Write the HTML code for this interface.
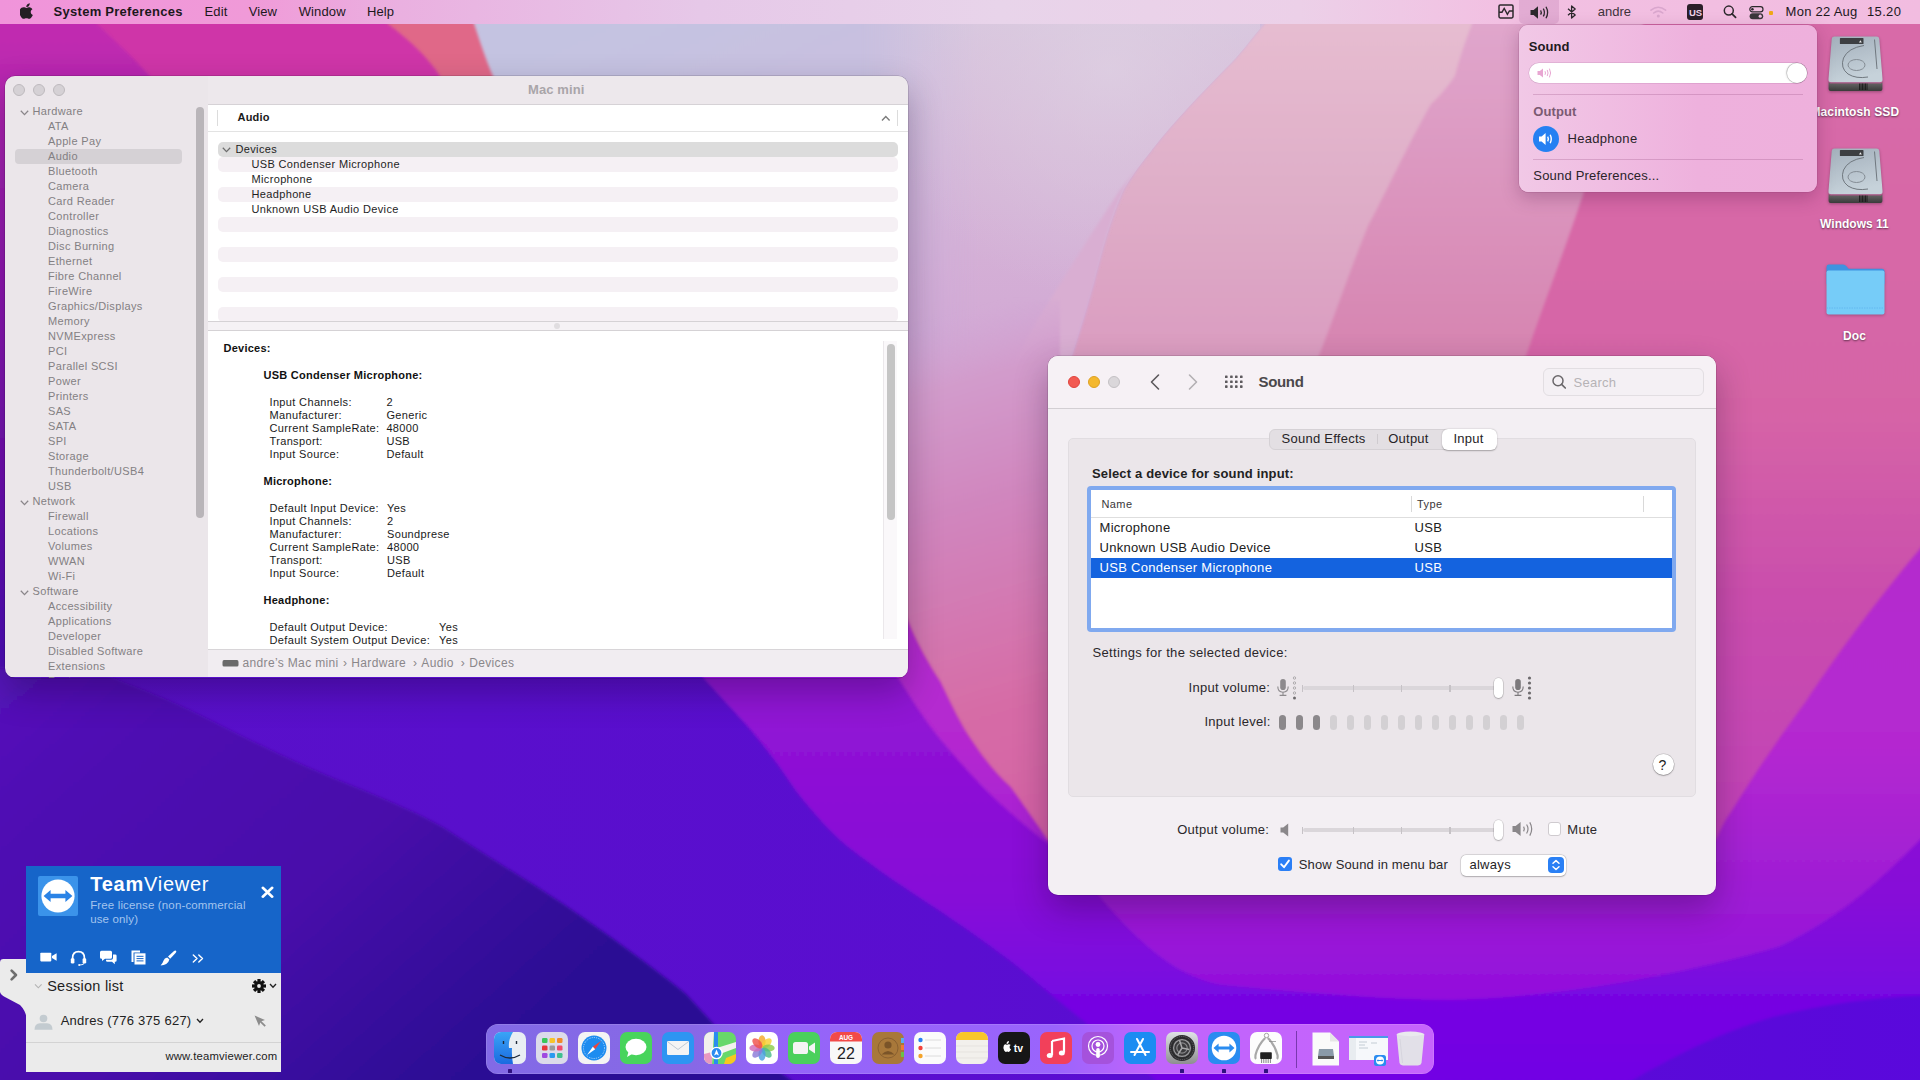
<!DOCTYPE html>
<html><head><meta charset="utf-8"><style>
*{box-sizing:border-box;margin:0;padding:0}
html,body{width:1920px;height:1080px;overflow:hidden;font-family:"Liberation Sans",sans-serif;}
body{position:relative;background:#5510cc}
.t{position:absolute;line-height:1;white-space:nowrap}
.r{position:absolute}
.win{position:absolute;overflow:hidden;box-shadow:0 0 0 0.5px rgba(0,0,0,0.22),0 14px 34px rgba(20,0,40,0.3)}
#wall{position:absolute;left:0;top:0;width:1920px;height:1080px}
#menubar{position:absolute;left:0;top:0;width:1920px;height:24px;
 background:linear-gradient(90deg,#f094da 0px,#f09ad8 250px,#eab0e0 400px,#e6c8e8 700px,#e8d4ea 1000px,#ecd0e8 1300px,#f2c0e2 1500px,#f2bce0 1920px);}
</style></head><body>
<svg id="wall" width="1920" height="1080" viewBox="0 0 1920 1080">
<defs>
 <filter id="bl" x="-5%" y="-5%" width="110%" height="110%"><feGaussianBlur stdDeviation="1.5"/></filter>
 <filter id="bl20" x="-20%" y="-20%" width="140%" height="140%"><feGaussianBlur stdDeviation="25"/></filter>
 <linearGradient id="gLav" gradientUnits="userSpaceOnUse" x1="600" y1="24" x2="850" y2="560">
  <stop offset="0" stop-color="#c4c3e1"/><stop offset="0.3" stop-color="#c9bfe0"/><stop offset="0.65" stop-color="#ccaad8"/><stop offset="1" stop-color="#c898d0"/>
 </linearGradient>
 <radialGradient id="gCloud" gradientUnits="userSpaceOnUse" cx="1110" cy="70" r="230"><stop offset="0" stop-color="#e0d4e4" stop-opacity="1"/><stop offset="0.5" stop-color="#dccce0" stop-opacity="0.7"/><stop offset="1" stop-color="#d8c8e0" stop-opacity="0"/></radialGradient>
 <linearGradient id="gBW" gradientUnits="userSpaceOnUse" x1="900" y1="330" x2="1050" y2="845">
  <stop offset="0" stop-color="#d0a6d4" stop-opacity="0"/><stop offset="0.12" stop-color="#d29ccc" stop-opacity="1"/><stop offset="0.35" stop-color="#d086be"/><stop offset="0.72" stop-color="#d66ca6"/><stop offset="1" stop-color="#d460a4"/>
 </linearGradient>
 <linearGradient id="gRP" x1="0" y1="0" x2="0" y2="1">
  <stop offset="0" stop-color="#d86ca8"/><stop offset="0.5" stop-color="#d664a6"/><stop offset="0.71" stop-color="#ca4eac"/><stop offset="1" stop-color="#c040b8"/>
 </linearGradient>
 <linearGradient id="gMag" x1="0" y1="0" x2="0" y2="1">
  <stop offset="0" stop-color="#b434c8"/><stop offset="0.75" stop-color="#b428d0"/><stop offset="0.88" stop-color="#a01ed4"/><stop offset="1" stop-color="#920edc"/>
 </linearGradient>
 <linearGradient id="gLeft" x1="0" y1="0" x2="0" y2="1">
  <stop offset="0" stop-color="#c02ab0"/><stop offset="0.086" stop-color="#c02ab0"/><stop offset="0.29" stop-color="#a020b0"/><stop offset="0.43" stop-color="#9018b0"/><stop offset="0.71" stop-color="#7010b0"/><stop offset="0.97" stop-color="#5010b8"/><stop offset="1" stop-color="#5010b8"/>
 </linearGradient>
 <radialGradient id="gGlow" cx="0.5" cy="0.5" r="0.5"><stop offset="0" stop-color="#a422d0" stop-opacity="0.8"/><stop offset="0.6" stop-color="#9c1ed2" stop-opacity="0.45"/><stop offset="1" stop-color="#9418d4" stop-opacity="0"/></radialGradient>
 <linearGradient id="gBase" x1="0" y1="0" x2="1" y2="0"><stop offset="0" stop-color="#5810c8"/><stop offset="0.5" stop-color="#5a0ed0"/><stop offset="1" stop-color="#5a08dc"/></linearGradient>
 <linearGradient id="gPur" x1="0" y1="0" x2="0" y2="1"><stop offset="0" stop-color="#9016d4"/><stop offset="0.66" stop-color="#9012d4"/><stop offset="0.82" stop-color="#860ed8"/><stop offset="0.91" stop-color="#7606e2"/><stop offset="1" stop-color="#7006e4"/></linearGradient>
 <linearGradient id="gB2" gradientUnits="userSpaceOnUse" x1="0" y1="24" x2="0" y2="356"><stop offset="0" stop-color="#e0a6cc"/><stop offset="1" stop-color="#d684b0"/></linearGradient>
 <linearGradient id="gB1" gradientUnits="userSpaceOnUse" x1="0" y1="24" x2="0" y2="356"><stop offset="0" stop-color="#e6bcd0"/><stop offset="0.5" stop-color="#dfaec8"/><stop offset="1" stop-color="#da9cc0"/></linearGradient>
 <linearGradient id="gDark" gradientUnits="userSpaceOnUse" x1="0" y1="680" x2="400" y2="1130"><stop offset="0" stop-color="#5412ba"/><stop offset="0.22" stop-color="#4e0eb2"/><stop offset="0.6" stop-color="#4810aa"/><stop offset="0.95" stop-color="#2e0e96"/><stop offset="1" stop-color="#2c0e94"/></linearGradient>
 <linearGradient id="gPL" gradientUnits="userSpaceOnUse" x1="0" y1="24" x2="0" y2="640"><stop offset="0" stop-color="#d8c6de"/><stop offset="0.2" stop-color="#d6b8d8"/><stop offset="0.53" stop-color="#d2a8d4"/><stop offset="1" stop-color="#cc9cd0"/></linearGradient>
 <linearGradient id="gPLm" gradientUnits="userSpaceOnUse" x1="860" y1="0" x2="980" y2="0"><stop offset="0" stop-color="#fff" stop-opacity="0"/><stop offset="1" stop-color="#fff" stop-opacity="1"/></linearGradient>
 <mask id="mPL"><rect x="800" y="-20" width="500" height="700" fill="url(#gPLm)"/></mask>
</defs>
<rect x="-20" y="-20" width="1960" height="1120" fill="url(#gBase)"/>
<!-- dark lower-left -->
<path d="M-20 620 L125 683 C170 700 190 710 208 719 C240 735 265 748 292 760 C330 778 370 792 400 806 C420 815 430 820 442.5 827 C490 858 530 882 564 904.5 C610 936 650 965 686 994 L719 1030 L820 1100 L-20 1100 Z" fill="url(#gDark)" filter="url(#bl)"/>
<!-- purple region -->
<path d="M600 560 L702.5 677 C720 697 735 712 747 725.75 C770 752 785 775 796 791 C815 815 830 832 848.75 847.6 C880 872 905 888 930 904.5 C960 924 985 942 1011 961.4 C1030 976 1045 990 1060 1002 L1180 1100 L1600 1100 C1680 1050 1730 1030 1773 1017 C1830 1003 1880 997 1940 995 L1940 -20 L600 -20 Z" fill="url(#gPur)" filter="url(#bl)"/>
<!-- magenta region -->
<path d="M880 640 L897.5 677 C915 705 930 728 946 746 C962 765 978 783 995 799 C1012 815 1030 830 1048 843.6 C1080 870 1100 900 1130 930 C1160 960 1190 980 1223 985 C1300 992 1380 1000 1452 1000 C1520 998 1580 990 1636 980 C1690 970 1740 958 1778 947 C1810 932 1840 912 1861 895 C1885 875 1905 855 1940 820 L1940 -20 L880 -20 Z" fill="url(#gMag)" filter="url(#bl)"/>
<!-- pink region -->
<path d="M880 560 L908.5 621 C918 645 930 665 941 682 C952 705 960 722 970.6 738 C985 760 998 775 1011 786.7 C1024 805 1036 822 1048 839.5 L1716 840 C1720 830 1725 820 1731 812 C1760 765 1785 730 1805.5 702 C1840 650 1880 595 1940 525 L1940 -20 L880 -20 Z" fill="url(#gRP)" filter="url(#bl)"/>
<!-- band 2 -->
<path d="M1652 -20 L1643 24 C1620 90 1600 150 1585 189 C1565 250 1545 300 1527 353 L1500 430 L880 430 L880 -20 Z" fill="url(#gB2)" filter="url(#bl)"/>
<!-- band 1 -->
<path d="M1480 -20 L1472 24 C1462 50 1458 65 1455 76 C1445 90 1438 98 1431 104 C1405 150 1385 195 1368 226 C1350 270 1335 315 1320 353 L1300 400 L880 400 L880 -20 Z" fill="url(#gB1)" filter="url(#bl)"/>
<!-- lavender -->
<path d="M1285 -20 L1264 24 C1250 40 1240 55 1226 68 C1200 95 1175 120 1153 148.6 C1142 162 1132 176 1124 189 C1112 215 1102 250 1094.6 280 C1088 305 1080 330 1072.5 354 C1065 372 1058 385 1048 400 C1000 450 980 480 957 514 C935 540 920 560 908 580 L880 640 L470 640 L470 -20 Z" fill="url(#gLav)" filter="url(#bl)"/>
<clipPath id="cpLav"><path d="M1285 -20 L1264 24 C1250 40 1240 55 1226 68 C1200 95 1175 120 1153 148.6 C1142 162 1132 176 1124 189 C1112 215 1102 250 1094.6 280 C1088 305 1080 330 1072.5 354 C1065 372 1058 385 1048 400 C1000 450 980 480 957 514 C935 540 920 560 908 580 L880 640 L470 640 L470 -20 Z"/></clipPath>
<g mask="url(#mPL)"><rect x="860" y="-20" width="400" height="680" fill="url(#gPL)" clip-path="url(#cpLav)"/></g>
<rect x="860" y="-20" width="500" height="500" fill="url(#gCloud)" clip-path="url(#cpLav)" opacity="0.6"/>
<path d="M1153 148.6 C1142 162 1132 176 1124 189 C1112 215 1102 250 1094.6 280 C1088 305 1080 330 1072.5 354 C1065 372 1058 385 1048 400 C1030 420 1010 445 990 470 L975 470 C980 450 984 435 988 420 C1010 370 1030 330 1050 300 C1075 260 1100 220 1120 190 Z" fill="#d9aed2" filter="url(#bl)"/>
<!-- between windows gradient -->
<path d="M880 300 L1060 300 L1060 845 L1048 839.5 C1036 822 1024 805 1011 786.7 C998 775 985 760 970.6 738 C960 722 952 705 941 682 C930 665 918 645 908.5 621 L880 560 Z" fill="url(#gBW)" filter="url(#bl)"/>
<!-- salmon -->
<path d="M-20 -20 L460 -20 C476 30 485 58 493 76 L520 200 L-20 200 Z" fill="#e06888" filter="url(#bl)"/>
<!-- magenta -->
<path d="M-20 -20 L365 -20 L388 24 C410 40 430 60 440 76 L460 200 L-20 200 Z" fill="#cf36a8" filter="url(#bl)"/>
<!-- left purple strip -->
<path d="M-20 -20 L52 -20 L97 24 C120 45 140 65 150 76 L160 200 L60 668 L-20 668 Z" fill="url(#gLeft)" filter="url(#bl)"/>
</svg>

<svg class="r" style="left:1827.5px;top:35.9px;filter:drop-shadow(0 1px 1.5px rgba(0,0,0,0.3))" width="55" height="56" viewBox="0 0 55 56">
<defs><linearGradient id="hg0" x1="0" y1="0" x2="0.3" y2="1"><stop offset="0" stop-color="#a3afbb"/><stop offset="1" stop-color="#c6d2da"/></linearGradient>
<linearGradient id="hb0" x1="0" y1="0" x2="0" y2="1"><stop offset="0" stop-color="#6a6a6a"/><stop offset="1" stop-color="#3a3a3a"/></linearGradient></defs>
<path d="M0.6 46 L2.5 47.5 H53 L54.4 46 V53 Q54.4 55 52.4 55 H2.6 Q0.6 55 0.6 53 Z" fill="url(#hb0)"/>
<path d="M6.5 0.6 H48.5 Q51 0.6 51.3 3 L54.5 43 Q54.8 46.2 51.8 46.2 H3.2 Q0.2 46.2 0.5 43 L3.7 3 Q4 0.6 6.5 0.6 Z" fill="url(#hg0)"/>
<rect x="11.9" y="2.1" width="23.6" height="5.9" rx="0.6" fill="#3d3f42"/>
<path d="M31 6.5 L32.4 4.2 L33.8 6.5 Z" fill="#eee"/>
<path d="M36 9.5 Q20 12 15.5 22 Q12 32 20 38 Q28 43 40 41" fill="none" stroke="#70787f" stroke-width="1"/>
<path d="M46.5 3.5 L49 33" fill="none" stroke="#70787f" stroke-width="1"/>
<ellipse cx="28.5" cy="29" rx="8.5" ry="5.5" fill="none" stroke="#7e868d" stroke-width="0.9"/>
<path d="M31.5 47.5 V54 M33 47.5 V54 M34.5 47.5 V54 M36 47.5 V54 M37.5 47.5 V54 M39 47.5 V54" stroke="#151515" stroke-width="0.8"/>
</svg>
<svg class="r" style="left:1827.5px;top:147.8px;filter:drop-shadow(0 1px 1.5px rgba(0,0,0,0.3))" width="55" height="56" viewBox="0 0 55 56">
<defs><linearGradient id="hg1" x1="0" y1="0" x2="0.3" y2="1"><stop offset="0" stop-color="#a3afbb"/><stop offset="1" stop-color="#c6d2da"/></linearGradient>
<linearGradient id="hb1" x1="0" y1="0" x2="0" y2="1"><stop offset="0" stop-color="#6a6a6a"/><stop offset="1" stop-color="#3a3a3a"/></linearGradient></defs>
<path d="M0.6 46 L2.5 47.5 H53 L54.4 46 V53 Q54.4 55 52.4 55 H2.6 Q0.6 55 0.6 53 Z" fill="url(#hb1)"/>
<path d="M6.5 0.6 H48.5 Q51 0.6 51.3 3 L54.5 43 Q54.8 46.2 51.8 46.2 H3.2 Q0.2 46.2 0.5 43 L3.7 3 Q4 0.6 6.5 0.6 Z" fill="url(#hg1)"/>
<rect x="11.9" y="2.1" width="23.6" height="5.9" rx="0.6" fill="#3d3f42"/>
<path d="M31 6.5 L32.4 4.2 L33.8 6.5 Z" fill="#eee"/>
<path d="M36 9.5 Q20 12 15.5 22 Q12 32 20 38 Q28 43 40 41" fill="none" stroke="#70787f" stroke-width="1"/>
<path d="M46.5 3.5 L49 33" fill="none" stroke="#70787f" stroke-width="1"/>
<ellipse cx="28.5" cy="29" rx="8.5" ry="5.5" fill="none" stroke="#7e868d" stroke-width="0.9"/>
<path d="M31.5 47.5 V54 M33 47.5 V54 M34.5 47.5 V54 M36 47.5 V54 M37.5 47.5 V54 M39 47.5 V54" stroke="#151515" stroke-width="0.8"/>
</svg>
<div class="t" style="left:1810.5px;top:105.9px;font-size:12px;color:#ffffff;font-weight:700;letter-spacing:0.1px;text-shadow:0 1px 2px rgba(0,0,0,0.55);">Macintosh SSD</div>
<div class="t" style="left:1820.1px;top:217.6px;font-size:12px;color:#ffffff;font-weight:700;letter-spacing:0.0px;text-shadow:0 1px 2px rgba(0,0,0,0.55);">Windows 11</div>
<svg class="r" style="left:1825.5px;top:264px;filter:drop-shadow(0 1px 1.5px rgba(0,0,0,0.25))" width="59" height="52" viewBox="0 0 59 52"><path d="M0.5 3 Q0.5 0.6 3 0.6 H17 Q19 0.6 20.5 2.3 L22.5 4.8 H56 Q58.5 4.8 58.5 7.3 V20 H0.5 Z" fill="#3f93e0"/><path d="M0.5 8.5 Q0.5 6.4 2.6 6.4 H56.4 Q58.5 6.4 58.5 8.5 V48.5 Q58.5 50.6 56.4 50.6 H2.6 Q0.5 50.6 0.5 48.5 Z" fill="#76ccf8"/><path d="M0.5 44 H58.5" stroke="#5fb4ee" stroke-width="0.8" stroke-dasharray="1.5 1"/></svg>
<div class="t" style="left:1843.0px;top:329.8px;font-size:12px;color:#ffffff;font-weight:700;letter-spacing:0.1px;text-shadow:0 1px 2px rgba(0,0,0,0.55);">Doc</div>
<div class="win" style="left:5px;top:76px;width:903px;height:602px;border-radius:10px;">
<div class="r" style="left:0.0px;top:0.0px;width:203.0px;height:601.0px;background:#ebe6ea;"></div>
<div class="r" style="left:203.0px;top:0.0px;width:700.0px;height:28.0px;background:#ede8ec;"></div>
<div class="r" style="left:203.0px;top:28.0px;width:700.0px;height:1.0px;background:#d6d2d6;"></div>
<div class="r" style="left:7.8px;top:8.0px;width:12.0px;height:12.0px;background:#d5d1d5;border-radius:50%;border:1px solid #bdb9bd;"></div>
<div class="r" style="left:27.8px;top:8.0px;width:12.0px;height:12.0px;background:#d5d1d5;border-radius:50%;border:1px solid #bdb9bd;"></div>
<div class="r" style="left:47.8px;top:8.0px;width:12.0px;height:12.0px;background:#d5d1d5;border-radius:50%;border:1px solid #bdb9bd;"></div>
<div class="t" style="left:523.0px;top:6.8px;font-size:13px;color:#a9a5a9;font-weight:700;letter-spacing:0.1px;">Mac mini</div>
<div class="r" style="left:10.0px;top:73.0px;width:167.0px;height:15.0px;background:#d5d1d5;border-radius:4px;"></div>
<svg class="r" style="left:14.5px;top:33.900000000000006px" width="9" height="6" viewBox="0 0 9 6"><path d="M0.8 0.8 L4.5 4.6 L8.2 0.8" fill="none" stroke="#8a868a" stroke-width="1.3"/></svg>
<div class="t" style="left:27.5px;top:29.6px;font-size:11px;color:#838083;letter-spacing:0.35px;">Hardware</div>
<div class="t" style="left:43.0px;top:44.6px;font-size:11px;color:#838083;letter-spacing:0.35px;">ATA</div>
<div class="t" style="left:43.0px;top:59.6px;font-size:11px;color:#838083;letter-spacing:0.35px;">Apple Pay</div>
<div class="t" style="left:43.0px;top:74.6px;font-size:11px;color:#838083;letter-spacing:0.35px;">Audio</div>
<div class="t" style="left:43.0px;top:89.6px;font-size:11px;color:#838083;letter-spacing:0.35px;">Bluetooth</div>
<div class="t" style="left:43.0px;top:104.6px;font-size:11px;color:#838083;letter-spacing:0.35px;">Camera</div>
<div class="t" style="left:43.0px;top:119.6px;font-size:11px;color:#838083;letter-spacing:0.35px;">Card Reader</div>
<div class="t" style="left:43.0px;top:134.6px;font-size:11px;color:#838083;letter-spacing:0.35px;">Controller</div>
<div class="t" style="left:43.0px;top:149.6px;font-size:11px;color:#838083;letter-spacing:0.35px;">Diagnostics</div>
<div class="t" style="left:43.0px;top:164.6px;font-size:11px;color:#838083;letter-spacing:0.35px;">Disc Burning</div>
<div class="t" style="left:43.0px;top:179.6px;font-size:11px;color:#838083;letter-spacing:0.35px;">Ethernet</div>
<div class="t" style="left:43.0px;top:194.6px;font-size:11px;color:#838083;letter-spacing:0.35px;">Fibre Channel</div>
<div class="t" style="left:43.0px;top:209.6px;font-size:11px;color:#838083;letter-spacing:0.35px;">FireWire</div>
<div class="t" style="left:43.0px;top:224.6px;font-size:11px;color:#838083;letter-spacing:0.35px;">Graphics/Displays</div>
<div class="t" style="left:43.0px;top:239.6px;font-size:11px;color:#838083;letter-spacing:0.35px;">Memory</div>
<div class="t" style="left:43.0px;top:254.6px;font-size:11px;color:#838083;letter-spacing:0.35px;">NVMExpress</div>
<div class="t" style="left:43.0px;top:269.6px;font-size:11px;color:#838083;letter-spacing:0.35px;">PCI</div>
<div class="t" style="left:43.0px;top:284.6px;font-size:11px;color:#838083;letter-spacing:0.35px;">Parallel SCSI</div>
<div class="t" style="left:43.0px;top:299.6px;font-size:11px;color:#838083;letter-spacing:0.35px;">Power</div>
<div class="t" style="left:43.0px;top:314.6px;font-size:11px;color:#838083;letter-spacing:0.35px;">Printers</div>
<div class="t" style="left:43.0px;top:329.6px;font-size:11px;color:#838083;letter-spacing:0.35px;">SAS</div>
<div class="t" style="left:43.0px;top:344.6px;font-size:11px;color:#838083;letter-spacing:0.35px;">SATA</div>
<div class="t" style="left:43.0px;top:359.6px;font-size:11px;color:#838083;letter-spacing:0.35px;">SPI</div>
<div class="t" style="left:43.0px;top:374.6px;font-size:11px;color:#838083;letter-spacing:0.35px;">Storage</div>
<div class="t" style="left:43.0px;top:389.6px;font-size:11px;color:#838083;letter-spacing:0.35px;">Thunderbolt/USB4</div>
<div class="t" style="left:43.0px;top:404.6px;font-size:11px;color:#838083;letter-spacing:0.35px;">USB</div>
<svg class="r" style="left:14.5px;top:423.9px" width="9" height="6" viewBox="0 0 9 6"><path d="M0.8 0.8 L4.5 4.6 L8.2 0.8" fill="none" stroke="#8a868a" stroke-width="1.3"/></svg>
<div class="t" style="left:27.5px;top:419.6px;font-size:11px;color:#838083;letter-spacing:0.35px;">Network</div>
<div class="t" style="left:43.0px;top:434.6px;font-size:11px;color:#838083;letter-spacing:0.35px;">Firewall</div>
<div class="t" style="left:43.0px;top:449.6px;font-size:11px;color:#838083;letter-spacing:0.35px;">Locations</div>
<div class="t" style="left:43.0px;top:464.6px;font-size:11px;color:#838083;letter-spacing:0.35px;">Volumes</div>
<div class="t" style="left:43.0px;top:479.6px;font-size:11px;color:#838083;letter-spacing:0.35px;">WWAN</div>
<div class="t" style="left:43.0px;top:494.6px;font-size:11px;color:#838083;letter-spacing:0.35px;">Wi-Fi</div>
<svg class="r" style="left:14.5px;top:513.9px" width="9" height="6" viewBox="0 0 9 6"><path d="M0.8 0.8 L4.5 4.6 L8.2 0.8" fill="none" stroke="#8a868a" stroke-width="1.3"/></svg>
<div class="t" style="left:27.5px;top:509.6px;font-size:11px;color:#838083;letter-spacing:0.35px;">Software</div>
<div class="t" style="left:43.0px;top:524.6px;font-size:11px;color:#838083;letter-spacing:0.35px;">Accessibility</div>
<div class="t" style="left:43.0px;top:539.6px;font-size:11px;color:#838083;letter-spacing:0.35px;">Applications</div>
<div class="t" style="left:43.0px;top:554.6px;font-size:11px;color:#838083;letter-spacing:0.35px;">Developer</div>
<div class="t" style="left:43.0px;top:569.6px;font-size:11px;color:#838083;letter-spacing:0.35px;">Disabled Software</div>
<div class="t" style="left:43.0px;top:584.6px;font-size:11px;color:#838083;letter-spacing:0.35px;">Extensions</div>
<div class="t" style="left:43.0px;top:599.6px;font-size:11px;color:#838083;letter-spacing:0.35px;">Fonts</div>
<div class="r" style="left:191.0px;top:31.0px;width:8.0px;height:411.0px;background:#b9b5b9;border-radius:4px;"></div>
<div class="r" style="left:203.0px;top:29.0px;width:700.0px;height:544.0px;background:#ffffff;"></div>
<div class="r" style="left:212.0px;top:34.0px;width:1.0px;height:16.0px;background:#dcdcdc;"></div>
<div class="t" style="left:232.5px;top:36.4px;font-size:11px;color:#1a1a1a;font-weight:700;letter-spacing:0.2px;">Audio</div>
<div class="r" style="left:879.0px;top:34.0px;width:1.0px;height:0.0px;background:#000;"></div>
<svg class="r" style="left:876px;top:39px" width="10" height="7" viewBox="0 0 10 7"><path d="M1 5.5 L4.8 1.6 L8.6 5.5" fill="none" stroke="#7c7c7c" stroke-width="1.4"/></svg>
<div class="r" style="left:892.0px;top:34.0px;width:1.0px;height:16.0px;background:#dcdcdc;"></div>
<div class="r" style="left:203.0px;top:55.0px;width:700.0px;height:1.0px;background:#e3e3e3;"></div>
<div class="r" style="left:213.0px;top:66.0px;width:680.0px;height:15.0px;background:#dcdcdc;border-radius:5px;"></div>
<div class="r" style="left:213.0px;top:81.0px;width:680.0px;height:15.0px;background:#f5f0f4;border-radius:5px;"></div>
<div class="r" style="left:213.0px;top:111.0px;width:680.0px;height:15.0px;background:#f5f0f4;border-radius:5px;"></div>
<div class="r" style="left:213.0px;top:141.0px;width:680.0px;height:15.0px;background:#f5f0f4;border-radius:5px;"></div>
<div class="r" style="left:213.0px;top:171.0px;width:680.0px;height:15.0px;background:#f5f0f4;border-radius:5px;"></div>
<div class="r" style="left:213.0px;top:201.0px;width:680.0px;height:15.0px;background:#f5f0f4;border-radius:5px;"></div>
<div class="r" style="left:213.0px;top:231.0px;width:680.0px;height:15.0px;background:#f5f0f4;border-radius:5px;"></div>
<svg class="r" style="left:217px;top:71px" width="9" height="6" viewBox="0 0 9 6"><path d="M0.8 0.8 L4.5 4.6 L8.2 0.8" fill="none" stroke="#6e6e6e" stroke-width="1.3"/></svg>
<div class="t" style="left:230.5px;top:67.5px;font-size:11px;color:#1e1e1e;letter-spacing:0.35px;">Devices</div>
<div class="t" style="left:246.5px;top:82.5px;font-size:11px;color:#1e1e1e;letter-spacing:0.35px;">USB Condenser Microphone</div>
<div class="t" style="left:246.5px;top:97.5px;font-size:11px;color:#1e1e1e;letter-spacing:0.35px;">Microphone</div>
<div class="t" style="left:246.5px;top:112.5px;font-size:11px;color:#1e1e1e;letter-spacing:0.35px;">Headphone</div>
<div class="t" style="left:246.5px;top:127.5px;font-size:11px;color:#1e1e1e;letter-spacing:0.35px;">Unknown USB Audio Device</div>
<div class="r" style="left:203.0px;top:245.0px;width:700.0px;height:10.0px;background:#f5f2f5;"></div>
<div class="r" style="left:203.0px;top:245.0px;width:700.0px;height:1.0px;background:#d5d2d5;"></div>
<div class="r" style="left:203.0px;top:254.0px;width:700.0px;height:1.0px;background:#d5d2d5;"></div>
<div class="r" style="left:549.0px;top:247.0px;width:6.0px;height:6.0px;background:#e0dde0;border-radius:50%;"></div>
<div class="t" style="left:218.5px;top:266.7px;font-size:11px;color:#111;font-weight:700;letter-spacing:0.25px;">Devices:</div>
<div class="t" style="left:258.5px;top:293.7px;font-size:11px;color:#111;font-weight:700;letter-spacing:0.25px;">USB Condenser Microphone:</div>
<div class="t" style="left:264.5px;top:320.7px;font-size:11px;color:#1a1a1a;letter-spacing:0.35px;">Input Channels:</div>
<div class="t" style="left:381.4px;top:320.7px;font-size:11px;color:#1a1a1a;letter-spacing:0.35px;">2</div>
<div class="t" style="left:264.5px;top:333.7px;font-size:11px;color:#1a1a1a;letter-spacing:0.35px;">Manufacturer:</div>
<div class="t" style="left:381.4px;top:333.7px;font-size:11px;color:#1a1a1a;letter-spacing:0.35px;">Generic</div>
<div class="t" style="left:264.5px;top:346.7px;font-size:11px;color:#1a1a1a;letter-spacing:0.35px;">Current SampleRate:</div>
<div class="t" style="left:381.4px;top:346.7px;font-size:11px;color:#1a1a1a;letter-spacing:0.35px;">48000</div>
<div class="t" style="left:264.5px;top:359.7px;font-size:11px;color:#1a1a1a;letter-spacing:0.35px;">Transport:</div>
<div class="t" style="left:381.4px;top:359.7px;font-size:11px;color:#1a1a1a;letter-spacing:0.35px;">USB</div>
<div class="t" style="left:264.5px;top:372.7px;font-size:11px;color:#1a1a1a;letter-spacing:0.35px;">Input Source:</div>
<div class="t" style="left:381.4px;top:372.7px;font-size:11px;color:#1a1a1a;letter-spacing:0.35px;">Default</div>
<div class="t" style="left:258.5px;top:399.7px;font-size:11px;color:#111;font-weight:700;letter-spacing:0.25px;">Microphone:</div>
<div class="t" style="left:264.5px;top:426.7px;font-size:11px;color:#1a1a1a;letter-spacing:0.35px;">Default Input Device:</div>
<div class="t" style="left:382.0px;top:426.7px;font-size:11px;color:#1a1a1a;letter-spacing:0.35px;">Yes</div>
<div class="t" style="left:264.5px;top:439.7px;font-size:11px;color:#1a1a1a;letter-spacing:0.35px;">Input Channels:</div>
<div class="t" style="left:382.0px;top:439.7px;font-size:11px;color:#1a1a1a;letter-spacing:0.35px;">2</div>
<div class="t" style="left:264.5px;top:452.7px;font-size:11px;color:#1a1a1a;letter-spacing:0.35px;">Manufacturer:</div>
<div class="t" style="left:382.0px;top:452.7px;font-size:11px;color:#1a1a1a;letter-spacing:0.35px;">Soundprese</div>
<div class="t" style="left:264.5px;top:465.7px;font-size:11px;color:#1a1a1a;letter-spacing:0.35px;">Current SampleRate:</div>
<div class="t" style="left:382.0px;top:465.7px;font-size:11px;color:#1a1a1a;letter-spacing:0.35px;">48000</div>
<div class="t" style="left:264.5px;top:478.7px;font-size:11px;color:#1a1a1a;letter-spacing:0.35px;">Transport:</div>
<div class="t" style="left:382.0px;top:478.7px;font-size:11px;color:#1a1a1a;letter-spacing:0.35px;">USB</div>
<div class="t" style="left:264.5px;top:491.7px;font-size:11px;color:#1a1a1a;letter-spacing:0.35px;">Input Source:</div>
<div class="t" style="left:382.0px;top:491.7px;font-size:11px;color:#1a1a1a;letter-spacing:0.35px;">Default</div>
<div class="t" style="left:258.5px;top:518.7px;font-size:11px;color:#111;font-weight:700;letter-spacing:0.25px;">Headphone:</div>
<div class="t" style="left:264.5px;top:545.7px;font-size:11px;color:#1a1a1a;letter-spacing:0.35px;">Default Output Device:</div>
<div class="t" style="left:434.0px;top:545.7px;font-size:11px;color:#1a1a1a;letter-spacing:0.35px;">Yes</div>
<div class="t" style="left:264.5px;top:558.7px;font-size:11px;color:#1a1a1a;letter-spacing:0.35px;">Default System Output Device:</div>
<div class="t" style="left:434.0px;top:558.7px;font-size:11px;color:#1a1a1a;letter-spacing:0.35px;">Yes</div>
<div class="t" style="left:264.5px;top:571.7px;font-size:11px;color:#1a1a1a;letter-spacing:0.35px;">Manufacturer:</div>
<div class="t" style="left:434.0px;top:571.7px;font-size:11px;color:#1a1a1a;letter-spacing:0.35px;">Generic</div>
<div class="r" style="left:878.0px;top:265.0px;width:14.0px;height:298.0px;background:#faf8fa;border-left:1px solid #ebe8eb;"></div>
<div class="r" style="left:882.0px;top:268.0px;width:8.0px;height:176.0px;background:#c5c5c5;border-radius:4px;"></div>
<div class="r" style="left:203.0px;top:573.0px;width:700.0px;height:28.0px;background:#f1edf1;"></div>
<div class="r" style="left:203.0px;top:573.0px;width:700.0px;height:1.0px;background:#d8d5d8;"></div>
<svg class="r" style="left:217px;top:583px" width="17" height="8" viewBox="0 0 17 8"><path d="M2 1 H15 Q16.5 1 16.5 3 V6 Q16.5 7.5 15 7.5 H2 Q0.5 7.5 0.5 6 V3 Q0.5 1 2 1Z" fill="#6a6a6a"/></svg>
<div class="t" style="left:237.5px;top:580.8px;font-size:12px;color:#8a878a;letter-spacing:0.35px;">andre’s Mac mini</div>
<div class="t" style="left:338.0px;top:580.8px;font-size:12px;color:#8a878a;">›</div>
<div class="t" style="left:346.3px;top:580.8px;font-size:12px;color:#8a878a;letter-spacing:0.35px;">Hardware</div>
<div class="t" style="left:408.0px;top:580.8px;font-size:12px;color:#8a878a;">›</div>
<div class="t" style="left:416.3px;top:580.8px;font-size:12px;color:#8a878a;letter-spacing:0.35px;">Audio</div>
<div class="t" style="left:455.8px;top:580.8px;font-size:12px;color:#8a878a;">›</div>
<div class="t" style="left:464.2px;top:580.8px;font-size:12px;color:#8a878a;letter-spacing:0.35px;">Devices</div>
</div>
<div class="win" style="left:1048px;top:356px;width:668px;height:539px;border-radius:10px;">
<div class="r" style="left:0.0px;top:0.0px;width:668.0px;height:539.0px;background:#f3eff3;"></div>
<div class="r" style="left:0.0px;top:0.0px;width:668.0px;height:52.0px;background:#f6f1f5;"></div>
<div class="r" style="left:0.0px;top:52.0px;width:668.0px;height:1.0px;background:#d3cfd3;"></div>
<div class="r" style="left:20.0px;top:20.0px;width:12.0px;height:12.0px;background:#f25a52;border-radius:50%;border:0.5px solid #e0443e;"></div>
<div class="r" style="left:40.0px;top:20.0px;width:12.0px;height:12.0px;background:#f4b82e;border-radius:50%;border:0.5px solid #dea123;"></div>
<div class="r" style="left:60.0px;top:20.0px;width:12.0px;height:12.0px;background:#dad7da;border-radius:50%;border:1px solid #c4c1c4;"></div>
<svg class="r" style="left:101px;top:17px" width="12" height="18" viewBox="0 0 12 18"><path d="M9.5 2 L2.5 9 L9.5 16" fill="none" stroke="#5c595c" stroke-width="1.6" stroke-linecap="round" stroke-linejoin="round"/></svg>
<svg class="r" style="left:139px;top:17px" width="12" height="18" viewBox="0 0 12 18"><path d="M2.5 2 L9.5 9 L2.5 16" fill="none" stroke="#b3b0b3" stroke-width="1.6" stroke-linecap="round" stroke-linejoin="round"/></svg>
<svg class="r" style="left:176px;top:18px" width="20" height="16" viewBox="0 0 20 16"><rect x="1.00" y="1.40" width="2.6" height="2.6" rx="0.6" fill="#5e5b5e"/><rect x="1.00" y="6.40" width="2.6" height="2.6" rx="0.6" fill="#5e5b5e"/><rect x="1.00" y="11.30" width="2.6" height="2.6" rx="0.6" fill="#5e5b5e"/><rect x="6.10" y="1.40" width="2.6" height="2.6" rx="0.6" fill="#5e5b5e"/><rect x="6.10" y="6.40" width="2.6" height="2.6" rx="0.6" fill="#5e5b5e"/><rect x="6.10" y="11.30" width="2.6" height="2.6" rx="0.6" fill="#5e5b5e"/><rect x="11.00" y="1.40" width="2.6" height="2.6" rx="0.6" fill="#5e5b5e"/><rect x="11.00" y="6.40" width="2.6" height="2.6" rx="0.6" fill="#5e5b5e"/><rect x="11.00" y="11.30" width="2.6" height="2.6" rx="0.6" fill="#5e5b5e"/><rect x="16.00" y="1.40" width="2.6" height="2.6" rx="0.6" fill="#5e5b5e"/><rect x="16.00" y="6.40" width="2.6" height="2.6" rx="0.6" fill="#5e5b5e"/><rect x="16.00" y="11.30" width="2.6" height="2.6" rx="0.6" fill="#5e5b5e"/></svg>
<div class="t" style="left:210.6px;top:18.3px;font-size:15px;color:#4b484b;font-weight:700;letter-spacing:-0.35px;">Sound</div>
<div class="r" style="left:494.5px;top:12.0px;width:161.5px;height:27.5px;background:#f4f0f4;border:1px solid #e2dee2;border-radius:6px;"></div>
<svg class="r" style="left:503px;top:18px" width="17" height="16" viewBox="0 0 17 16"><circle cx="7" cy="6.8" r="5" fill="none" stroke="#6a676a" stroke-width="1.5"/><path d="M10.6 10.4 L14.3 14" stroke="#6a676a" stroke-width="1.7" stroke-linecap="round"/></svg>
<div class="t" style="left:525.6px;top:20.0px;font-size:13px;color:#b6b3b6;letter-spacing:0.25px;">Search</div>
<div class="r" style="left:20.0px;top:82.0px;width:628.0px;height:359.0px;background:#ebe6ea;border:1px solid #e1dde1;border-radius:5px;"></div>
<div class="r" style="left:220.5px;top:72.5px;width:228.0px;height:21.0px;background:#e3dfe3;border:1px solid #d5d1d5;border-radius:6px;"></div>
<div class="r" style="left:328.5px;top:78.0px;width:1.0px;height:10.0px;background:#cfcbcf;"></div>
<div class="r" style="left:394.0px;top:72.5px;width:54.5px;height:21.0px;background:#ffffff;border-radius:6px;box-shadow:0 0.5px 1.5px rgba(0,0,0,0.3);"></div>
<div class="t" style="left:233.6px;top:76.2px;font-size:13px;color:#262326;letter-spacing:0.25px;">Sound Effects</div>
<div class="t" style="left:340.2px;top:76.2px;font-size:13px;color:#262326;letter-spacing:0.25px;">Output</div>
<div class="t" style="left:405.4px;top:76.2px;font-size:13px;color:#262326;letter-spacing:0.25px;">Input</div>
<div class="t" style="left:43.9px;top:111.2px;font-size:13px;color:#222;font-weight:700;letter-spacing:0.17px;">Select a device for sound input:</div>
<div class="r" style="left:39.2px;top:130.3px;width:589.0px;height:145.7px;background:#80a9ef;border-radius:4px;"></div>
<div class="r" style="left:43.0px;top:134.0px;width:581.0px;height:138.0px;background:#ffffff;"></div>
<div class="t" style="left:53.4px;top:143.3px;font-size:11px;color:#3a373a;letter-spacing:0.45px;">Name</div>
<div class="r" style="left:362.5px;top:140.0px;width:1.0px;height:16.0px;background:#d9d9d9;"></div>
<div class="t" style="left:369.0px;top:143.3px;font-size:11px;color:#3a373a;letter-spacing:0.45px;">Type</div>
<div class="r" style="left:595.0px;top:140.0px;width:1.0px;height:16.0px;background:#d9d9d9;"></div>
<div class="r" style="left:43.0px;top:161.0px;width:581.0px;height:1.0px;background:#dedede;"></div>
<div class="r" style="left:43.0px;top:202.0px;width:581.0px;height:20.0px;background:#1463df;"></div>
<div class="t" style="left:51.5px;top:164.9px;font-size:13px;color:#202020;letter-spacing:0.3px;">Microphone</div>
<div class="t" style="left:366.6px;top:164.9px;font-size:13px;color:#202020;letter-spacing:0.3px;">USB</div>
<div class="t" style="left:51.5px;top:184.9px;font-size:13px;color:#202020;letter-spacing:0.3px;">Unknown USB Audio Device</div>
<div class="t" style="left:366.6px;top:184.9px;font-size:13px;color:#202020;letter-spacing:0.3px;">USB</div>
<div class="t" style="left:51.5px;top:204.9px;font-size:13px;color:#ffffff;letter-spacing:0.3px;">USB Condenser Microphone</div>
<div class="t" style="left:366.6px;top:204.9px;font-size:13px;color:#ffffff;letter-spacing:0.3px;">USB</div>
<div class="t" style="left:44.5px;top:289.9px;font-size:13px;color:#2a272a;letter-spacing:0.33px;">Settings for the selected device:</div>
<div class="t" style="left:140.5px;top:324.5px;font-size:13px;color:#2a272a;letter-spacing:0.28px;">Input volume:</div>
<div class="t" style="left:156.4px;top:359.0px;font-size:13px;color:#2a272a;letter-spacing:0.28px;">Input level:</div>
<svg class="r" style="left:229px;top:323px" width="12" height="17" viewBox="0 0 12 17"><rect x="3.2" y="0" width="5.6" height="11" rx="2.8" fill="#8d8a8d"/><path d="M0.8 7.5 Q0.8 13.2 6 13.2 Q11.2 13.2 11.2 7.5" fill="none" stroke="#8d8a8d" stroke-width="1.1"/><path d="M6 13.2 V16.2 M2.6 16.4 H9.4" stroke="#8d8a8d" stroke-width="1.1"/></svg>
<svg class="r" style="left:464px;top:323px" width="12" height="17" viewBox="0 0 12 17"><rect x="3.2" y="0" width="5.6" height="11" rx="2.8" fill="#7c797c"/><path d="M0.8 7.5 Q0.8 13.2 6 13.2 Q11.2 13.2 11.2 7.5" fill="none" stroke="#7c797c" stroke-width="1.1"/><path d="M6 13.2 V16.2 M2.6 16.4 H9.4" stroke="#7c797c" stroke-width="1.1"/></svg>
<svg class="r" style="left:244px;top:320px" width="5" height="24" viewBox="0 0 5 24"><circle cx="2.5" cy="2" r="1.2" fill="none" stroke="#a09da0" stroke-width="0.8"/><circle cx="2.5" cy="7" r="1.2" fill="none" stroke="#a09da0" stroke-width="0.8"/><circle cx="2.5" cy="12" r="1.2" fill="none" stroke="#a09da0" stroke-width="0.8"/><circle cx="2.5" cy="17" r="1.2" fill="none" stroke="#a09da0" stroke-width="0.8"/><circle cx="2.5" cy="22" r="1.5" fill="#6e6b6e"/></svg>
<svg class="r" style="left:479px;top:320px" width="5" height="24" viewBox="0 0 5 24"><circle cx="2.5" cy="2" r="1.6" fill="#6e6b6e"/><circle cx="2.5" cy="7" r="1.6" fill="#6e6b6e"/><circle cx="2.5" cy="12" r="1.6" fill="#6e6b6e"/><circle cx="2.5" cy="17" r="1.6" fill="#6e6b6e"/><circle cx="2.5" cy="22" r="1.6" fill="#6e6b6e"/></svg>
<div class="r" style="left:254.5px;top:330.4px;width:193.0px;height:3.2px;background:#dad6da;border-radius:2px;"></div>
<div class="r" style="left:254.1px;top:328.5px;width:1.4px;height:7.0px;background:#c6c2c6;"></div>
<div class="r" style="left:305.1px;top:328.5px;width:1.4px;height:7.0px;background:#c6c2c6;"></div>
<div class="r" style="left:353.0px;top:328.5px;width:1.4px;height:7.0px;background:#c6c2c6;"></div>
<div class="r" style="left:401.2px;top:328.5px;width:1.4px;height:7.0px;background:#c6c2c6;"></div>
<div class="r" style="left:446.0px;top:322.0px;width:9.0px;height:20.0px;background:#ffffff;border-radius:5px;box-shadow:0 0 0 0.5px rgba(0,0,0,0.18),0 1px 1.5px rgba(0,0,0,0.22);"></div>
<div class="r" style="left:231.0px;top:359.0px;width:7.0px;height:15.0px;background:#8b888b;border-radius:3.5px;"></div>
<div class="r" style="left:248.0px;top:359.0px;width:7.0px;height:15.0px;background:#8b888b;border-radius:3.5px;"></div>
<div class="r" style="left:265.0px;top:359.0px;width:7.0px;height:15.0px;background:#8b888b;border-radius:3.5px;"></div>
<div class="r" style="left:282.0px;top:359.0px;width:7.0px;height:15.0px;background:#d3d0d3;border-radius:3.5px;"></div>
<div class="r" style="left:299.0px;top:359.0px;width:7.0px;height:15.0px;background:#d3d0d3;border-radius:3.5px;"></div>
<div class="r" style="left:316.0px;top:359.0px;width:7.0px;height:15.0px;background:#d3d0d3;border-radius:3.5px;"></div>
<div class="r" style="left:333.0px;top:359.0px;width:7.0px;height:15.0px;background:#d3d0d3;border-radius:3.5px;"></div>
<div class="r" style="left:350.0px;top:359.0px;width:7.0px;height:15.0px;background:#d3d0d3;border-radius:3.5px;"></div>
<div class="r" style="left:367.0px;top:359.0px;width:7.0px;height:15.0px;background:#d3d0d3;border-radius:3.5px;"></div>
<div class="r" style="left:384.0px;top:359.0px;width:7.0px;height:15.0px;background:#d3d0d3;border-radius:3.5px;"></div>
<div class="r" style="left:401.0px;top:359.0px;width:7.0px;height:15.0px;background:#d3d0d3;border-radius:3.5px;"></div>
<div class="r" style="left:418.0px;top:359.0px;width:7.0px;height:15.0px;background:#d3d0d3;border-radius:3.5px;"></div>
<div class="r" style="left:435.0px;top:359.0px;width:7.0px;height:15.0px;background:#d3d0d3;border-radius:3.5px;"></div>
<div class="r" style="left:452.0px;top:359.0px;width:7.0px;height:15.0px;background:#d3d0d3;border-radius:3.5px;"></div>
<div class="r" style="left:469.0px;top:359.0px;width:7.0px;height:15.0px;background:#d3d0d3;border-radius:3.5px;"></div>
<div class="r" style="left:604.5px;top:397.5px;width:21.0px;height:21.0px;background:#ffffff;border-radius:50%;box-shadow:0 0 0 0.5px rgba(0,0,0,0.2),0 1px 1.5px rgba(0,0,0,0.25);"></div>
<div class="t" style="left:610.6px;top:401.6px;font-size:14px;color:#222;">?</div>
<div class="t" style="left:129.2px;top:467.1px;font-size:13px;color:#2a272a;letter-spacing:0.28px;">Output volume:</div>
<svg class="r" style="left:232px;top:467px" width="10" height="14" viewBox="0 0 10 14"><path d="M0.5 4.5 H3.2 L8.2 0.6 V13.4 L3.2 9.5 H0.5 Z" fill="#8a878a"/></svg>
<div class="r" style="left:254.5px;top:472.4px;width:193.0px;height:3.2px;background:#dad6da;border-radius:2px;"></div>
<div class="r" style="left:254.1px;top:470.5px;width:1.4px;height:7.0px;background:#c6c2c6;"></div>
<div class="r" style="left:305.1px;top:470.5px;width:1.4px;height:7.0px;background:#c6c2c6;"></div>
<div class="r" style="left:353.0px;top:470.5px;width:1.4px;height:7.0px;background:#c6c2c6;"></div>
<div class="r" style="left:401.2px;top:470.5px;width:1.4px;height:7.0px;background:#c6c2c6;"></div>
<div class="r" style="left:446.0px;top:464.0px;width:9.0px;height:20.0px;background:#ffffff;border-radius:5px;box-shadow:0 0 0 0.5px rgba(0,0,0,0.18),0 1px 1.5px rgba(0,0,0,0.22);"></div>
<svg class="r" style="left:464px;top:465px" width="23" height="16" viewBox="0 0 23 16"><path d="M0.5 5 H3.6 L8.6 1 V15 L3.6 11 H0.5 Z" fill="#8a878a"/><path d="M11.6 5.6 Q13.1 8 11.6 10.4" fill="none" stroke="#8a878a" stroke-width="1.2"/><path d="M14.6 3.5 Q17.4 8 14.6 12.5" fill="none" stroke="#8a878a" stroke-width="1.2"/><path d="M17.8 1.4 Q21.6 8 17.8 14.6" fill="none" stroke="#8a878a" stroke-width="1.2"/></svg>
<div class="r" style="left:499.5px;top:466.3px;width:13.5px;height:13.5px;background:#ffffff;border:1px solid #cfcbcf;border-radius:3px;"></div>
<div class="t" style="left:519.3px;top:466.9px;font-size:13px;color:#2a272a;letter-spacing:0.3px;">Mute</div>
<div class="r" style="left:230.0px;top:501.2px;width:14.0px;height:14.0px;background:#2a7ff6;border-radius:3px;"></div>
<svg class="r" style="left:230px;top:501px" width="14" height="14" viewBox="0 0 14 14"><path d="M3.2 7.3 L6 10.2 L10.9 3.6" fill="none" stroke="#fff" stroke-width="1.9" stroke-linecap="round" stroke-linejoin="round"/></svg>
<div class="t" style="left:250.8px;top:501.9px;font-size:13px;color:#2a272a;letter-spacing:0.14px;">Show Sound in menu bar</div>
<div class="r" style="left:413.0px;top:499.0px;width:105.0px;height:20.5px;background:#ffffff;border-radius:5px;box-shadow:0 0 0 0.5px rgba(0,0,0,0.16),0 0.5px 1.5px rgba(0,0,0,0.22);"></div>
<div class="t" style="left:421.4px;top:502.0px;font-size:13px;color:#262326;letter-spacing:0.3px;">always</div>
<div class="r" style="left:500.0px;top:501.0px;width:16.3px;height:16.3px;background:#2a80f5;border-radius:4px;"></div>
<svg class="r" style="left:500px;top:501px" width="16" height="16" viewBox="0 0 16 16"><path d="M5 6.3 L8 3.6 L11 6.3 M5 9.8 L8 12.5 L11 9.8" fill="none" stroke="#fff" stroke-width="1.5" stroke-linecap="round" stroke-linejoin="round"/></svg>
</div>
<svg class="r" style="left:0px;top:958px;" width="27" height="62" viewBox="0 0 27 62"><path d="M0 4.5 Q0 1.1 3.5 1.1 H27 V62 Q26 53 20 47 L4 38.5 Q0 36 0 33.5 Z" fill="#ebebeb"/><path d="M11.6 12.6 L16 17 L11.6 21.4" fill="none" stroke="#6e6e6e" stroke-width="2.6" stroke-linecap="round" stroke-linejoin="round"/></svg>
<div class="r" style="left:26.0px;top:866.0px;width:255.0px;height:106.6px;background:#1665c9;"></div>
<div class="r" style="left:26.0px;top:972.6px;width:255.0px;height:99.4px;background:#ebebeb;"></div>
<div class="r" style="left:38.1px;top:876.0px;width:40.0px;height:40.0px;background:#3b93ea;border-radius:2px;"></div>
<svg class="r" style="left:38.1px;top:876px;" width="40" height="40" viewBox="0 0 40 40"><circle cx="20" cy="20" r="16.6" fill="#fff"/><path d="M5.6 20 L12.6 14 V17.8 H27.4 V14 L34.4 20 L27.4 26 V22.2 H12.6 V26 Z" fill="#2a83e6"/></svg>
<div class="t" style="left:90.2px;top:874.1px;font-size:20px;color:#ffffff;letter-spacing:0.75px;"><b>Team</b>Viewer</div>
<div class="t" style="left:90.2px;top:900.2px;font-size:11.5px;color:#a3c4ee;letter-spacing:0.14px;">Free license (non-commercial</div>
<div class="t" style="left:90.2px;top:913.8px;font-size:11.5px;color:#a3c4ee;letter-spacing:0.14px;">use only)</div>
<svg class="r" style="left:260.5px;top:886px;" width="13" height="12.5" viewBox="0 0 13 12.5"><path d="M1.8 1.8 L11.2 10.7 M11.2 1.8 L1.8 10.7" stroke="#fff" stroke-width="2.6" stroke-linecap="round"/></svg>
<svg class="r" style="left:39.5px;top:952px;" width="17" height="10" viewBox="0 0 17 10"><rect x="0.3" y="0.8" width="11" height="8.6" rx="0.8" fill="#fff"/><path d="M12 4 L16.6 1.2 V8.8 L12 6 Z" fill="#fff"/></svg>
<svg class="r" style="left:69.5px;top:949.5px;" width="17" height="16" viewBox="0 0 17 16"><path d="M2.6 10 V8 Q2.6 1.6 8.5 1.6 Q14.4 1.6 14.4 8 V10" fill="none" stroke="#fff" stroke-width="1.7"/><rect x="0.8" y="8.2" width="3.6" height="5.4" rx="1.4" fill="#fff"/><rect x="12.6" y="8.2" width="3.6" height="5.4" rx="1.4" fill="#fff"/><path d="M14 13.5 Q13 15 9.6 15" fill="none" stroke="#fff" stroke-width="1.1"/><circle cx="9.2" cy="15" r="1" fill="#fff"/></svg>
<svg class="r" style="left:99.5px;top:950px;" width="17" height="15" viewBox="0 0 17 15"><path d="M1.5 0.8 H10.5 Q12 0.8 12 2.3 V7.2 Q12 8.7 10.5 8.7 H5 L2 11 V8.7 H1.5 Q0 8.7 0 7.2 V2.3 Q0 0.8 1.5 0.8 Z" fill="#fff"/><path d="M13 4.4 H15.3 Q16.6 4.4 16.6 5.7 V10.4 Q16.6 11.7 15.3 11.7 H14.8 V14.2 L12 11.7 H7.4 Q6 11.7 6 10.4 V9.7 H11.3 Q13 9.7 13 8 Z" fill="#fff"/></svg>
<svg class="r" style="left:130.8px;top:950px;" width="15" height="15" viewBox="0 0 15 15"><path d="M0.5 0.5 H9 V2.5 H2.5 V12 H0.5 Z" fill="#fff"/><rect x="3.5" y="3.3" width="11" height="11.2" fill="#fff"/><path d="M5.5 6.3 H12.5 M5.5 8.6 H12.5 M5.5 10.9 H12.5" stroke="#1665c9" stroke-width="1"/></svg>
<svg class="r" style="left:160px;top:949.5px;" width="17" height="16" viewBox="0 0 17 16"><path d="M16 0.8 Q16.8 1.6 15.8 2.8 L10.2 8.8 L8 6.6 L14 1 Q15.2 0 16 0.8 Z" fill="#fff"/><path d="M7.2 7.4 L9.4 9.6 Q8.8 12.4 6.2 14 Q4 15.4 0.6 15.4 Q3 12.6 3.6 10.4 Q4.4 7.8 7.2 7.4 Z" fill="#fff"/></svg>
<svg class="r" style="left:192px;top:954px;" width="13" height="9" viewBox="0 0 13 9"><path d="M1.3 1 L5 4.5 L1.3 8 M6.8 1 L10.5 4.5 L6.8 8" fill="none" stroke="#fff" stroke-width="1.4" stroke-linecap="round" stroke-linejoin="round"/></svg>
<svg class="r" style="left:33.5px;top:982.5px;" width="9" height="7" viewBox="0 0 9 7"><path d="M1 1.3 L4.3 4.8 L7.6 1.3" fill="none" stroke="#b4b4b4" stroke-width="1.1"/></svg>
<div class="t" style="left:47.2px;top:978.5px;font-size:14.5px;color:#1e1e1e;letter-spacing:0.26px;">Session list</div>
<svg class="r" style="left:252px;top:979px;" width="14" height="14" viewBox="0 0 14 14"><g transform="translate(7,7)"><rect x="-1.6" y="-7" width="3.2" height="3.4" fill="#111" transform="rotate(0)"/><rect x="-1.6" y="-7" width="3.2" height="3.4" fill="#111" transform="rotate(45)"/><rect x="-1.6" y="-7" width="3.2" height="3.4" fill="#111" transform="rotate(90)"/><rect x="-1.6" y="-7" width="3.2" height="3.4" fill="#111" transform="rotate(135)"/><rect x="-1.6" y="-7" width="3.2" height="3.4" fill="#111" transform="rotate(180)"/><rect x="-1.6" y="-7" width="3.2" height="3.4" fill="#111" transform="rotate(225)"/><rect x="-1.6" y="-7" width="3.2" height="3.4" fill="#111" transform="rotate(270)"/><rect x="-1.6" y="-7" width="3.2" height="3.4" fill="#111" transform="rotate(315)"/><circle r="4.7" fill="#111"/><circle r="1.9" fill="#ebebeb"/></g></svg>
<svg class="r" style="left:268.5px;top:983px;" width="8" height="6" viewBox="0 0 8 6"><path d="M1 1 L4 4.3 L7 1" fill="none" stroke="#222" stroke-width="1.3"/></svg>
<svg class="r" style="left:33.5px;top:1013.5px;" width="19" height="16" viewBox="0 0 19 16"><circle cx="9.5" cy="4.5" r="3.8" fill="#c3cbd0"/><path d="M0.5 15.8 Q0.5 9.6 6 9.2 H13 Q18.5 9.6 18.5 15.8 Z" fill="#c3cbd0"/></svg>
<div class="t" style="left:60.7px;top:1014.4px;font-size:13px;color:#222;letter-spacing:0.25px;">Andres (776 375 627)</div>
<svg class="r" style="left:196px;top:1017.5px;" width="8" height="6" viewBox="0 0 8 6"><path d="M1 1 L4 4.3 L7 1" fill="none" stroke="#222" stroke-width="1.3"/></svg>
<svg class="r" style="left:254px;top:1014.5px;" width="12" height="12" viewBox="0 0 12 12"><path d="M0.6 0.6 L11 5 L6.6 6.6 L5 11 Z" fill="#8c8c8c"/><path d="M5.6 5.6 L11.2 11.2" stroke="#8c8c8c" stroke-width="1.8"/></svg>
<div class="r" style="left:26.0px;top:1042.0px;width:255.0px;height:1.0px;background:#d3d3d3;"></div>
<div class="t" style="left:165.4px;top:1051.0px;font-size:11.3px;color:#222;letter-spacing:0.19px;">www.teamviewer.com</div>
<div class="r" style="left:486.0px;top:1024.2px;width:947.5px;height:50.0px;background:linear-gradient(90deg,#826ae6 0%,#8868e6 22%,#9464f8 29%,#9a64fc 60%,#c064fc 70%,#c664fc 100%);border-radius:12px;box-shadow:inset 0 0 0 0.5px rgba(255,255,255,0.25);"></div>
<svg class="r" style="left:494px;top:1032px" width="32" height="32" viewBox="0 0 32 32"><defs><linearGradient id="fb" x1="0" y1="0" x2="0" y2="1"><stop offset="0" stop-color="#3aa4f6"/><stop offset="1" stop-color="#1a6ae0"/></linearGradient></defs><clipPath id="fc"><rect width="32" height="32" rx="7"/></clipPath><g clip-path="url(#fc)"><rect width="32" height="32" fill="#e9eef3"/><path d="M0 0 H19 Q14 8 15 16 H18 Q17.5 24 19 32 H0 Z" fill="url(#fb)"/></g><path d="M6 23 Q16 29 26 23" fill="none" stroke="#1e2a3a" stroke-width="1.3"/><path d="M9.5 9 V12 M22.5 9 V12" stroke="#1e2a3a" stroke-width="1.4"/></svg>
<svg class="r" style="left:536px;top:1032px" width="32" height="32" viewBox="0 0 32 32"><defs></defs><rect x="0" y="0" width="32" height="32" rx="7" fill="#dcdbea"/><rect x="6.0" y="6.0" width="5.5" height="5" rx="1.3" fill="#3ac85a"/><rect x="13.5" y="6.0" width="5.5" height="5" rx="1.3" fill="#f6c42a"/><rect x="21.0" y="6.0" width="5.5" height="5" rx="1.3" fill="#f08a2a"/><rect x="6.0" y="13.5" width="5.5" height="5" rx="1.3" fill="#e8383a"/><rect x="13.5" y="13.5" width="5.5" height="5" rx="1.3" fill="#9a9a9a"/><rect x="21.0" y="13.5" width="5.5" height="5" rx="1.3" fill="#f04a6a"/><rect x="6.0" y="21.0" width="5.5" height="5" rx="1.3" fill="#a04ae0"/><rect x="13.5" y="21.0" width="5.5" height="5" rx="1.3" fill="#2a9af0"/><rect x="21.0" y="21.0" width="5.5" height="5" rx="1.3" fill="#40c090"/></svg>
<svg class="r" style="left:578px;top:1032px" width="32" height="32" viewBox="0 0 32 32"><defs></defs><rect x="0" y="0" width="32" height="32" rx="7" fill="#f4f4f4"/><circle cx="16" cy="16" r="12.5" fill="#1d8cf0"/><circle cx="16" cy="16" r="10.5" fill="none" stroke="#fff" stroke-width="0.8" stroke-dasharray="0.7 1.2"/><path d="M23 9 L17.2 17.2 L14.8 14.8 Z" fill="#f0443a"/><path d="M9 23 L14.8 14.8 L17.2 17.2 Z" fill="#fff"/></svg>
<svg class="r" style="left:620px;top:1032px" width="32" height="32" viewBox="0 0 32 32"><defs></defs><rect x="0" y="0" width="32" height="32" rx="7" fill="#48d45c"/><ellipse cx="16" cy="15" rx="10.5" ry="8.2" fill="#fff"/><path d="M8.5 20 L7 25 L13 21.5 Z" fill="#fff"/></svg>
<svg class="r" style="left:662px;top:1032px" width="32" height="32" viewBox="0 0 32 32"><defs></defs><rect x="0" y="0" width="32" height="32" rx="7" fill="#2d95f2"/><rect x="5" y="9" width="22" height="14" rx="1.3" fill="#f4f4f4"/><path d="M5.5 9.6 L16 17.5 L26.5 9.6" fill="none" stroke="#b8c4d0" stroke-width="0.9"/></svg>
<svg class="r" style="left:704px;top:1032px" width="32" height="32" viewBox="0 0 32 32"><defs></defs><clipPath id="mc"><rect width="32" height="32" rx="7"/></clipPath><g clip-path="url(#mc)"><rect width="32" height="32" fill="#68d86a"/><path d="M0 0 H10 L8 32 H0 Z" fill="#f2f0ec"/><path d="M0 20 L32 10 V16 L0 28 Z" fill="#f4f2ee"/><path d="M10 0 H14 V32 H10 Z" fill="#2a8cf0"/><path d="M22 26 L32 22 V32 H20 Z" fill="#f8c820"/><path d="M0 22 L8 20 V32 H0 Z" fill="#e898c0"/></g><circle cx="12.5" cy="21" r="5.6" fill="#2a8cf0" stroke="#fff" stroke-width="1.4"/><path d="M12.5 17.6 L15 23.6 L12.5 22.3 L10 23.6 Z" fill="#fff"/></svg>
<svg class="r" style="left:746px;top:1032px" width="32" height="32" viewBox="0 0 32 32"><defs></defs><rect x="0" y="0" width="32" height="32" rx="7" fill="#ffffff"/><ellipse cx="16" cy="9.5" rx="3.6" ry="6.2" fill="#f4a82a" opacity="0.82" transform="rotate(0 16 16)"/><ellipse cx="16" cy="9.5" rx="3.6" ry="6.2" fill="#f6d032" opacity="0.82" transform="rotate(45 16 16)"/><ellipse cx="16" cy="9.5" rx="3.6" ry="6.2" fill="#8ccc4a" opacity="0.82" transform="rotate(90 16 16)"/><ellipse cx="16" cy="9.5" rx="3.6" ry="6.2" fill="#4abc8a" opacity="0.82" transform="rotate(135 16 16)"/><ellipse cx="16" cy="9.5" rx="3.6" ry="6.2" fill="#4aa0e0" opacity="0.82" transform="rotate(180 16 16)"/><ellipse cx="16" cy="9.5" rx="3.6" ry="6.2" fill="#8a7ad8" opacity="0.82" transform="rotate(225 16 16)"/><ellipse cx="16" cy="9.5" rx="3.6" ry="6.2" fill="#d06ab8" opacity="0.82" transform="rotate(270 16 16)"/><ellipse cx="16" cy="9.5" rx="3.6" ry="6.2" fill="#f0504a" opacity="0.82" transform="rotate(315 16 16)"/></svg>
<svg class="r" style="left:788px;top:1032px" width="32" height="32" viewBox="0 0 32 32"><defs></defs><rect x="0" y="0" width="32" height="32" rx="7" fill="#4ad05c"/><rect x="5" y="10" width="15" height="12" rx="2.6" fill="#f4f4f4"/><path d="M21 14.5 L27 10.5 V21.5 L21 17.5 Z" fill="#f4f4f4"/></svg>
<svg class="r" style="left:830px;top:1032px" width="32" height="32" viewBox="0 0 32 32"><defs></defs><clipPath id="cc"><rect width="32" height="32" rx="7"/></clipPath><g clip-path="url(#cc)"><rect width="32" height="32" fill="#f8f8f8"/><rect width="32" height="9.5" fill="#f24a48"/></g><text x="16" y="7.6" font-family="Liberation Sans" font-weight="700" font-size="6.4" fill="#fff" text-anchor="middle">AUG</text><text x="16" y="27" font-family="Liberation Sans" font-size="16" fill="#222" text-anchor="middle">22</text></svg>
<svg class="r" style="left:872px;top:1032px" width="32" height="32" viewBox="0 0 32 32"><defs></defs><rect x="0" y="0" width="32" height="32" rx="7" fill="#a8783a"/><rect x="29" y="6" width="3" height="5" fill="#5aaef0"/><rect x="29" y="13" width="3" height="5" fill="#f07a3a"/><rect x="29" y="20" width="3" height="5" fill="#6ac04a"/><circle cx="16" cy="16" r="10" fill="none" stroke="#8a6030" stroke-width="1"/><circle cx="16" cy="13" r="3.6" fill="#7a5428"/><path d="M9.5 22.5 Q16 15.5 22.5 22.5" fill="#7a5428"/></svg>
<svg class="r" style="left:914px;top:1032px" width="32" height="32" viewBox="0 0 32 32"><defs></defs><rect x="0" y="0" width="32" height="32" rx="7" fill="#fbfbfb"/><circle cx="6.5" cy="8" r="2.2" fill="#2a80f2"/><circle cx="6.5" cy="16" r="2.2" fill="#f2423a"/><circle cx="6.5" cy="24" r="2.2" fill="#f4a42a"/><path d="M11 8 H27 M11 16 H27 M11 24 H27" stroke="#d8d8d8" stroke-width="0.9"/></svg>
<svg class="r" style="left:956px;top:1032px" width="32" height="32" viewBox="0 0 32 32"><defs></defs><clipPath id="nc"><rect width="32" height="32" rx="7"/></clipPath><g clip-path="url(#nc)"><rect width="32" height="32" fill="#f2f0ec"/><rect width="32" height="8" fill="#f8c62a"/><path d="M0 14 H32 M0 20 H32 M0 26 H32" stroke="#dedcd8" stroke-width="0.6"/></g></svg>
<svg class="r" style="left:998px;top:1032px" width="32" height="32" viewBox="0 0 32 32"><defs></defs><rect x="0" y="0" width="32" height="32" rx="7" fill="#161616"/><path d="M10.3 11.2 Q11 10.2 10.9 9 Q9.8 9.1 9.1 10 Q8.5 10.8 8.6 11.9 Q9.6 12 10.3 11.2 Z M10.9 12.3 Q9.8 12.2 9.2 12.8 Q8.6 12.8 7.8 12.3 Q6.5 12.3 5.8 13.5 Q4.8 15.6 6.2 18.6 Q7 19.9 7.9 19.9 Q8.6 19.9 9.2 19.5 Q10 19.5 10.6 19.9 Q11.5 19.9 12.3 18.6 Q12.8 17.8 13 17.2 Q11.6 16.5 11.6 14.9 Q11.6 13.6 12.7 12.9 Q12 12.3 10.9 12.3 Z" fill="#fff"/><text x="20.5" y="19.8" font-family="Liberation Sans" font-weight="700" font-size="10.5" fill="#fff" text-anchor="middle">tv</text></svg>
<svg class="r" style="left:1040px;top:1032px" width="32" height="32" viewBox="0 0 32 32"><defs></defs><rect x="0" y="0" width="32" height="32" rx="7" fill="#f2405a"/><path d="M12 9 L24 6.5 V20.5" fill="none" stroke="#fff" stroke-width="2.2"/><path d="M12 9 V23" stroke="#fff" stroke-width="2.2"/><ellipse cx="9.8" cy="23.4" rx="3" ry="2.5" fill="#fff"/><ellipse cx="21.8" cy="21" rx="3" ry="2.5" fill="#fff"/></svg>
<svg class="r" style="left:1082px;top:1032px" width="32" height="32" viewBox="0 0 32 32"><defs></defs><rect x="0" y="0" width="32" height="32" rx="7" fill="#a552dc"/><circle cx="16" cy="14" r="9.5" fill="none" stroke="#fff" stroke-width="1.2"/><circle cx="16" cy="14" r="6" fill="none" stroke="#fff" stroke-width="1.2"/><circle cx="16" cy="12.5" r="2.4" fill="#fff"/><rect x="14.2" y="16" width="3.6" height="10" rx="1.8" fill="#fff"/></svg>
<svg class="r" style="left:1124px;top:1032px" width="32" height="32" viewBox="0 0 32 32"><defs></defs><rect x="0" y="0" width="32" height="32" rx="7" fill="#1c8cf2"/><path d="M13 7 L21.5 23 M19 7 L10.5 23 M7 20 H25" stroke="#fff" stroke-width="2" stroke-linecap="round"/></svg>
<svg class="r" style="left:1166px;top:1032px" width="32" height="32" viewBox="0 0 32 32"><defs><linearGradient id="spg" x1="0" y1="0" x2="0" y2="1"><stop offset="0" stop-color="#dfe3e6"/><stop offset="1" stop-color="#8e8e90"/></linearGradient></defs><rect x="0" y="0" width="32" height="32" rx="7" fill="url(#spg)"/><circle cx="16" cy="16" r="13" fill="#2a2a2c"/><circle cx="16" cy="16" r="11.6" fill="none" stroke="#6a6a6c" stroke-width="1" stroke-dasharray="1 0.9"/><circle cx="16" cy="16" r="9.6" fill="#3a3a3c"/><circle cx="16" cy="16" r="8.4" fill="none" stroke="#9a9a9c" stroke-width="1.3"/><circle cx="16" cy="16" r="5.2" fill="none" stroke="#8a8a8c" stroke-width="1.2"/><path d="M16 16 L13.5 8.2 M16 16 L23.2 17.5 M16 16 L11.8 22.6" stroke="#a8a8aa" stroke-width="1.5"/></svg>
<svg class="r" style="left:1208px;top:1032px" width="32" height="32" viewBox="0 0 32 32"><defs></defs><rect x="0" y="0" width="32" height="32" rx="7" fill="#2a8cf0"/><circle cx="16" cy="16" r="12.3" fill="#fff"/><path d="M5.5 16 L10.6 11.6 V14.4 H21.4 V11.6 L26.5 16 L21.4 20.4 V17.6 H10.6 V20.4 Z" fill="#2a8cf0"/></svg>
<svg class="r" style="left:1250px;top:1032px" width="32" height="32" viewBox="0 0 32 32"><defs></defs><rect x="0" y="0" width="32" height="32" rx="7" fill="#fdfdfd"/><circle cx="16.5" cy="3.5" r="2.2" fill="none" stroke="#9a9a9a" stroke-width="0.9"/><path d="M15.2 6 Q8 13 5.5 23 Q5 26 6 27" fill="none" stroke="#a8a8a8" stroke-width="2.2"/><path d="M17.8 6 Q25 13 27.5 23 Q28 26 27 27" fill="none" stroke="#a8a8a8" stroke-width="2.2"/><path d="M19 9.5 H26" stroke="#888" stroke-width="0.7"/><rect x="10.2" y="20.2" width="11.6" height="6.8" rx="0.8" fill="#222"/><path d="M11.6 27 V31 M13.8 27 V31 M16 27 V31 M18.2 27 V31 M20.4 27 V31" stroke="#777" stroke-width="0.9"/></svg>
<div class="r" style="left:1296.0px;top:1031.0px;width:1.0px;height:36.5px;background:rgba(60,20,110,0.55);"></div>
<svg class="r" style="left:1312px;top:1032px" width="28" height="34" viewBox="0 0 28 34"><path d="M0.5 0.5 H18 L27 9.5 V33.5 H0.5 Z" fill="#fafafa"/><path d="M18 0.5 V9.5 H27" fill="#e6e6e6"/><path d="M7 17 H21 L22 24 H6 Z" fill="#8a9aa8"/><rect x="6" y="24" width="16" height="3" fill="#555"/></svg>
<svg class="r" style="left:1348.5px;top:1036px" width="40" height="31" viewBox="0 0 40 31"><rect x="0" y="0" width="39" height="24" fill="#f6f8fb"/><rect x="0" y="0" width="39" height="2" fill="#4a9ae8"/><rect x="0" y="2" width="7" height="22" fill="#e8ecf0"/><path d="M10 6 H18 M10 9 H16 M10 12 H19 M22 7 H28" stroke="#b8c0cc" stroke-width="0.8"/><rect x="25" y="19" width="12" height="11" rx="2.5" fill="#2a8cf0"/><circle cx="31" cy="24.5" r="4" fill="#fff"/><path d="M27.6 24.5 L29.3 23.2 V24 H32.7 V23.2 L34.4 24.5 L32.7 25.8 V25 H29.3 V25.8 Z" fill="#2a8cf0"/></svg>
<svg class="r" style="left:1395.5px;top:1031px" width="29" height="35" viewBox="0 0 29 35"><ellipse cx="14.5" cy="3.5" rx="13.8" ry="3" fill="#eaeaee"/><path d="M0.7 3.5 L3.5 32 Q4 34.2 7 34.4 H22 Q25 34.2 25.5 32 L28.3 3.5 Q14.5 7 0.7 3.5 Z" fill="#e2e0e8"/><path d="M4 8 L6.5 32" stroke="#cfcdd6" stroke-width="0.6"/></svg>
<div class="r" style="left:508.3px;top:1069.2px;width:3.4px;height:3.4px;background:#2e1080;border-radius:0.6px;"></div>
<div class="r" style="left:1180.3px;top:1069.2px;width:3.4px;height:3.4px;background:#2e1080;border-radius:0.6px;"></div>
<div class="r" style="left:1222.3px;top:1069.2px;width:3.4px;height:3.4px;background:#2e1080;border-radius:0.6px;"></div>
<div class="r" style="left:1264.3px;top:1069.2px;width:3.4px;height:3.4px;background:#2e1080;border-radius:0.6px;"></div>
<div id="menubar"></div>
<svg class="r" style="left:19.5px;top:3px;transform:scale(0.87,0.8);transform-origin:0 0;" width="15" height="20" viewBox="0 0 15 20"><path d="M10.2 3.6 C10.9 2.7 11.4 1.5 11.3 0.3 C10.2 0.4 9 1 8.3 1.9 C7.6 2.7 7.1 3.9 7.2 5 C8.4 5.1 9.5 4.5 10.2 3.6 Z M11.3 5.4 C9.6 5.3 8.2 6.3 7.4 6.3 C6.6 6.3 5.4 5.4 4.1 5.4 C2.4 5.5 0.9 6.4 0.1 7.9 C-1.6 10.8 -0.3 15.2 1.3 17.5 C2.1 18.6 3 19.9 4.3 19.8 C5.5 19.8 5.9 19.1 7.4 19.1 C8.9 19.1 9.3 19.8 10.5 19.8 C11.8 19.8 12.6 18.6 13.4 17.5 C14.3 16.2 14.7 15 14.7 14.9 C14.7 14.9 12.3 14 12.3 11.2 C12.3 8.9 14.2 7.8 14.3 7.7 C13.2 6.1 11.6 5.5 11.3 5.4 Z" fill="#231f23"/></svg>
<div class="t" style="left:53.6px;top:4.8px;font-size:13px;color:#1c181c;font-weight:700;letter-spacing:0.27px;">System Preferences</div>
<div class="t" style="left:204.5px;top:4.8px;font-size:13px;color:#1c181c;letter-spacing:0.12px;">Edit</div>
<div class="t" style="left:248.7px;top:4.8px;font-size:13px;color:#1c181c;letter-spacing:0.12px;">View</div>
<div class="t" style="left:298.7px;top:4.8px;font-size:13px;color:#1c181c;letter-spacing:0.12px;">Window</div>
<div class="t" style="left:367.0px;top:4.8px;font-size:13px;color:#1c181c;letter-spacing:0.12px;">Help</div>
<svg class="r" style="left:1497.5px;top:4px;" width="16" height="15" viewBox="0 0 16 15"><rect x="1" y="0.9" width="14" height="13" rx="1.3" fill="none" stroke="#2c282c" stroke-width="1.5"/><path d="M1 8.2 H4 L6.2 4.5 L9.4 10.4 L11.4 7 H15" fill="none" stroke="#2c282c" stroke-width="1.4"/></svg>
<div class="r" style="left:1519.0px;top:0.0px;width:40.0px;height:23.5px;background:rgba(170,100,160,0.22);border-radius:0 0 5px 5px;"></div>
<svg class="r" style="left:1529.5px;top:5.5px;" width="19" height="13" viewBox="0 0 19 13"><path d="M0.5 4 H3.6 L8 0.3 V12.7 L3.6 9 H0.5 Z" fill="#2c282c"/><path d="M10.6 4.3 Q12 6.5 10.6 8.7" fill="none" stroke="#2c282c" stroke-width="1.3"/><path d="M13.3 2.6 Q15.6 6.5 13.3 10.4" fill="none" stroke="#2c282c" stroke-width="1.3"/><path d="M16 0.8 Q19.2 6.5 16 12.2" fill="none" stroke="#2c282c" stroke-width="1.3"/></svg>
<svg class="r" style="left:1567px;top:5px;" width="10" height="14" viewBox="0 0 10 14"><path d="M1 3.8 L8.2 10 L4.6 13 V1 L8.2 4 L1 10.2" fill="none" stroke="#2c282c" stroke-width="1.3" stroke-linejoin="round"/></svg>
<div class="t" style="left:1597.7px;top:4.8px;font-size:13px;color:#3e343c;letter-spacing:0.0px;">andre</div>
<svg class="r" style="left:1649.5px;top:5.5px;" width="17" height="12" viewBox="0 0 17 12"><path d="M1 4.2 Q8.2 -1.6 15.6 4.2" fill="none" stroke="#d9a6cd" stroke-width="1.6" stroke-linecap="round"/><path d="M3.7 7 Q8.2 3.2 12.8 7" fill="none" stroke="#d9a6cd" stroke-width="1.6" stroke-linecap="round"/><circle cx="8.3" cy="10" r="1.5" fill="#d9a6cd"/></svg>
<div class="r" style="left:1687.0px;top:4.0px;width:16.0px;height:16.0px;background:#2a1f29;border-radius:3px;"></div>
<div class="t" style="left:1689.1px;top:8.4px;font-size:9.5px;color:#f2d2ea;font-weight:700;letter-spacing:-0.2px;">US</div>
<svg class="r" style="left:1722.5px;top:5px;" width="14" height="14" viewBox="0 0 14 14"><circle cx="5.8" cy="5.6" r="4.5" fill="none" stroke="#2c282c" stroke-width="1.5"/><path d="M9 8.9 L12.6 12.4" stroke="#2c282c" stroke-width="1.7" stroke-linecap="round"/></svg>
<svg class="r" style="left:1748.5px;top:5.5px;" width="15" height="14" viewBox="0 0 15 14"><rect x="0.8" y="0.6" width="13.2" height="5.2" rx="2.6" fill="none" stroke="#2c282c" stroke-width="1.2"/><circle cx="3.4" cy="3.2" r="1.3" fill="#2c282c"/><rect x="0.6" y="7.2" width="13.6" height="6" rx="3" fill="#3a363a"/><circle cx="11.2" cy="10.2" r="1.6" fill="#f3c0e4"/></svg>
<div class="r" style="left:1768.8px;top:10.6px;width:3.8px;height:4.8px;background:#f0a818;border-radius:1px;"></div>
<div class="t" style="left:1785.6px;top:4.8px;font-size:13px;color:#1c181c;letter-spacing:0.26px;">Mon 22 Aug</div>
<div class="t" style="left:1867.0px;top:4.8px;font-size:13px;color:#1c181c;letter-spacing:0.35px;">15.20</div>
<div class="r" style="left:1519px;top:25px;width:298px;height:167px;border-radius:9px;background:linear-gradient(90deg,#f1c8e6 0%,#f0bde2 30%,#eeb1dd 60%,#eeb0dc 100%);box-shadow:0 0 0 0.5px rgba(120,50,100,0.3),0 6px 18px rgba(80,20,70,0.28);overflow:hidden">
<div class="t" style="left:9.7px;top:14.8px;font-size:13px;color:#1e1a1e;font-weight:700;letter-spacing:0.1px;">Sound</div>
<div class="r" style="left:9.7px;top:37.8px;width:278.5px;height:20.5px;background:#ffffff;border-radius:10.25px;box-shadow:0 0 0 0.5px rgba(120,60,110,0.25);"></div>
<div class="r" style="left:267.5px;top:37.8px;width:20.7px;height:20.5px;background:#ffffff;border-radius:50%;box-shadow:0 0 0 0.6px rgba(0,0,0,0.2),-1px 0 2px rgba(0,0,0,0.12);"></div>
<svg class="r" style="left:17.5px;top:43px" width="16" height="10" viewBox="0 0 16 10"><path d="M0.5 3 H2.8 L6 0.4 V9.6 L2.8 7 H0.5 Z" fill="#e8a6d2"/><path d="M8 3.2 Q9 5 8 6.8" fill="none" stroke="#e8a6d2" stroke-width="1"/><path d="M10.2 1.9 Q11.9 5 10.2 8.1" fill="none" stroke="#e8a6d2" stroke-width="1"/><path d="M12.4 0.6 Q14.8 5 12.4 9.4" fill="none" stroke="#e8a6d2" stroke-width="1"/></svg>
<div class="r" style="left:14.3px;top:69.0px;width:269.5px;height:1.0px;background:rgba(150,80,130,0.28);"></div>
<div class="t" style="left:14.3px;top:80.3px;font-size:13px;color:#7a5a72;font-weight:700;letter-spacing:0.1px;">Output</div>
<div class="r" style="left:14.0px;top:100.8px;width:26.0px;height:26.0px;background:#2580f2;border-radius:50%;"></div>
<svg class="r" style="left:14px;top:100.8px" width="26" height="26" viewBox="0 0 26 26"><path d="M6 10.6 H8.6 L12.6 7 V19 L8.6 15.4 H6 Z" fill="#fff"/><path d="M14.7 10.6 Q16 13 14.7 15.4" fill="none" stroke="#fff" stroke-width="1.4"/><path d="M17.2 8.8 Q19.3 13 17.2 17.2" fill="none" stroke="#fff" stroke-width="1.4"/></svg>
<div class="t" style="left:48.5px;top:107.3px;font-size:13px;color:#2a242a;letter-spacing:0.3px;">Headphone</div>
<div class="r" style="left:14.3px;top:133.7px;width:269.5px;height:1.0px;background:rgba(150,80,130,0.28);"></div>
<div class="t" style="left:14.3px;top:144.0px;font-size:13px;color:#2a242a;letter-spacing:0.2px;">Sound Preferences...</div>
</div>
</body></html>
